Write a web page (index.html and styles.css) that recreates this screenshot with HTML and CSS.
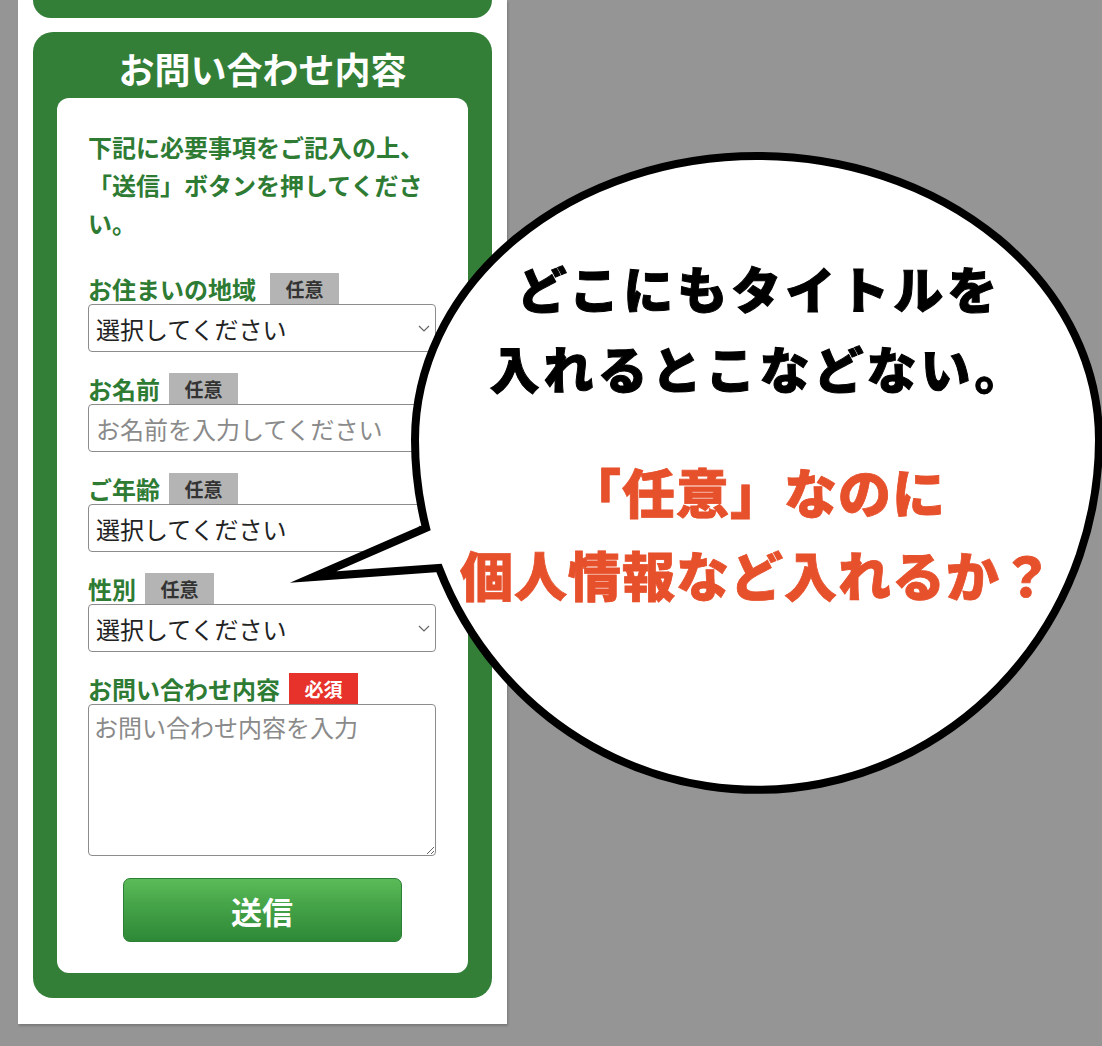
FILE: index.html
```html
<!DOCTYPE html>
<html lang="ja">
<head>
<meta charset="utf-8">
<title>お問い合わせ内容</title>
<link rel="stylesheet" href="styles.css">
</head>
<body>
<div class="stage">
  <div class="phone">
    <div class="prev-card"></div>
    <section class="card">
      <h2 class="card-title">お問い合わせ内容</h2>
      <div class="card-body">
        <p class="intro">下記に必要事項をご記入の上、「送信」ボタンを押してください。</p>

        <div class="field">
          <div class="field-label"><span class="label-text">お住まいの地域</span><span class="badge badge-wide">任意</span></div>
          <div class="select-wrap">
            <select class="control"><option>選択してください</option></select>
            <svg class="chev" width="12" height="7" viewBox="0 0 12 7"><polyline points="1,1 6,6 11,1" fill="none" stroke="#666" stroke-width="1.2"/></svg>
          </div>
        </div>

        <div class="field">
          <div class="field-label"><span class="label-text">お名前</span><span class="badge">任意</span></div>
          <input class="control" type="text" placeholder="お名前を入力してください">
        </div>

        <div class="field">
          <div class="field-label"><span class="label-text">ご年齢</span><span class="badge">任意</span></div>
          <div class="select-wrap">
            <select class="control"><option>選択してください</option></select>
            <svg class="chev" width="12" height="7" viewBox="0 0 12 7"><polyline points="1,1 6,6 11,1" fill="none" stroke="#666" stroke-width="1.2"/></svg>
          </div>
        </div>

        <div class="field">
          <div class="field-label"><span class="label-text">性別</span><span class="badge">任意</span></div>
          <div class="select-wrap">
            <select class="control"><option>選択してください</option></select>
            <svg class="chev" width="12" height="7" viewBox="0 0 12 7"><polyline points="1,1 6,6 11,1" fill="none" stroke="#666" stroke-width="1.2"/></svg>
          </div>
        </div>

        <div class="field field-last">
          <div class="field-label"><span class="label-text">お問い合わせ内容</span><span class="badge badge-req">必須</span></div>
          <textarea class="control textarea" placeholder="お問い合わせ内容を入力"></textarea>
        </div>

        <div class="btn-row"><button class="submit" type="button">送信</button></div>
      </div>
    </section>
  </div>

  <svg class="bubble" width="1102" height="1046" viewBox="0 0 1102 1046">
    <path d="M 426 528 A 342 351 0 0 1 415 440 A 342 284 0 0 1 1099 440 A 342 351 0 0 1 439 568 L 313 577 Z" fill="#fff" stroke="#000" stroke-width="8" stroke-linejoin="miter" stroke-miterlimit="20"/>
  </svg>

  <div class="bubble-text">
    <div class="bt-black">
      <div class="bt-line">どこにもタイトルを</div>
      <div class="bt-line">入れるとこなどない。</div>
    </div>
    <div class="bt-red">
      <div class="bt-line">「任意」なのに</div>
      <div class="bt-line">個人情報など入れるか？</div>
    </div>
  </div>
</div>
</body>
</html>
```

FILE: styles.css
```css
* { box-sizing: border-box; }

html, body {
  margin: 0;
  padding: 0;
  background: #959595;
}

body {
  font-family: "Noto Sans CJK JP", "Noto Sans", sans-serif;
}

.stage {
  position: relative;
  width: 1102px;
  height: 1046px;
  overflow: hidden;
}

.phone {
  width: 489px;
  height: 1024px;
  margin-left: 18px;
  background: #fff;
  box-shadow: 1px 2px 2px rgba(0, 0, 0, 0.18);
  padding: 0 15px;
}

.prev-card {
  height: 18px;
  background: #347f38;
  border-radius: 0 0 20px 20px;
}

.card {
  margin-top: 14px;
  background: #347f38;
  border-radius: 20px;
  padding: 0 24px 25px;
}

.card-title {
  margin: 0;
  padding-top: 7px;
  height: 66px;
  line-height: 59px;
  text-align: center;
  color: #fff;
  font-size: 36px;
  font-weight: 700;
}

.card-body {
  background: #fff;
  border-radius: 12px;
  padding: 30px 32px 31px 31px;
}

.intro {
  margin: 0 0 31px;
  color: #2e7b34;
  font-size: 24px;
  font-weight: 700;
  line-height: 38px;
}

.field {
  margin-bottom: 21px;
}

.field-last {
  margin-bottom: 22px;
}

.field-label {
  display: flex;
  align-items: center;
  height: 31px;
}

.label-text {
  color: #2e7b34;
  font-size: 24px;
  font-weight: 700;
  line-height: 31px;
}

.badge {
  margin-left: 9px;
  width: 69px;
  height: 31px;
  line-height: 31px;
  text-align: center;
  background: #b4b4b4;
  color: #333;
  font-size: 19px;
  font-weight: 700;
}

.badge-wide {
  margin-left: 14px;
}

.badge-req {
  background: #e6322a;
  color: #fff;
}

.select-wrap {
  position: relative;
}

.control {
  display: block;
  width: 100%;
  height: 48px;
  margin: 0;
  padding: 0 7px;
  border: 1px solid #8c8c8c;
  border-radius: 4px;
  background: #fff;
  color: #222;
  font-family: "Noto Sans CJK JP", "Noto Sans", sans-serif;
  font-size: 24px;
  -webkit-appearance: none;
  appearance: none;
  outline: none;
}

.control::placeholder {
  color: #8a8a8a;
}

.chev {
  position: absolute;
  right: 6px;
  top: 21px;
}

.textarea {
  height: 152px;
  padding: 5px 5px;
  line-height: 1.4;
  resize: vertical;
}

.btn-row {
  display: flex;
  justify-content: center;
}

.submit {
  width: 279px;
  height: 64px;
  border: 1px solid #2c7f35;
  border-radius: 7px;
  background: linear-gradient(to bottom, #5bbb58 0%, #44a247 45%, #2e8937 100%);
  color: #fff;
  font-family: "Noto Sans CJK JP", "Noto Sans", sans-serif;
  font-size: 31px;
  font-weight: 700;
  line-height: 1;
}

.bubble {
  position: absolute;
  left: 0;
  top: 0;
  pointer-events: none;
}

.bubble-text {
  position: absolute;
  left: 414px;
  top: 247px;
  width: 686px;
  text-align: center;
  font-weight: 900;
}

.bt-black {
  color: #000;
  font-size: 50px;
  letter-spacing: 4px;
  padding-left: 4px;
  -webkit-text-stroke: 1px #000;
}

.bt-black .bt-line {
  height: 80px;
  line-height: 80px;
}

.bt-red {
  margin-top: 43px;
  color: #e6502b;
  font-size: 53px;
  letter-spacing: 1px;
  -webkit-text-stroke: 0.8px #e6502b;
}

.bt-red .bt-line {
  height: 83px;
  line-height: 83px;
}
```
